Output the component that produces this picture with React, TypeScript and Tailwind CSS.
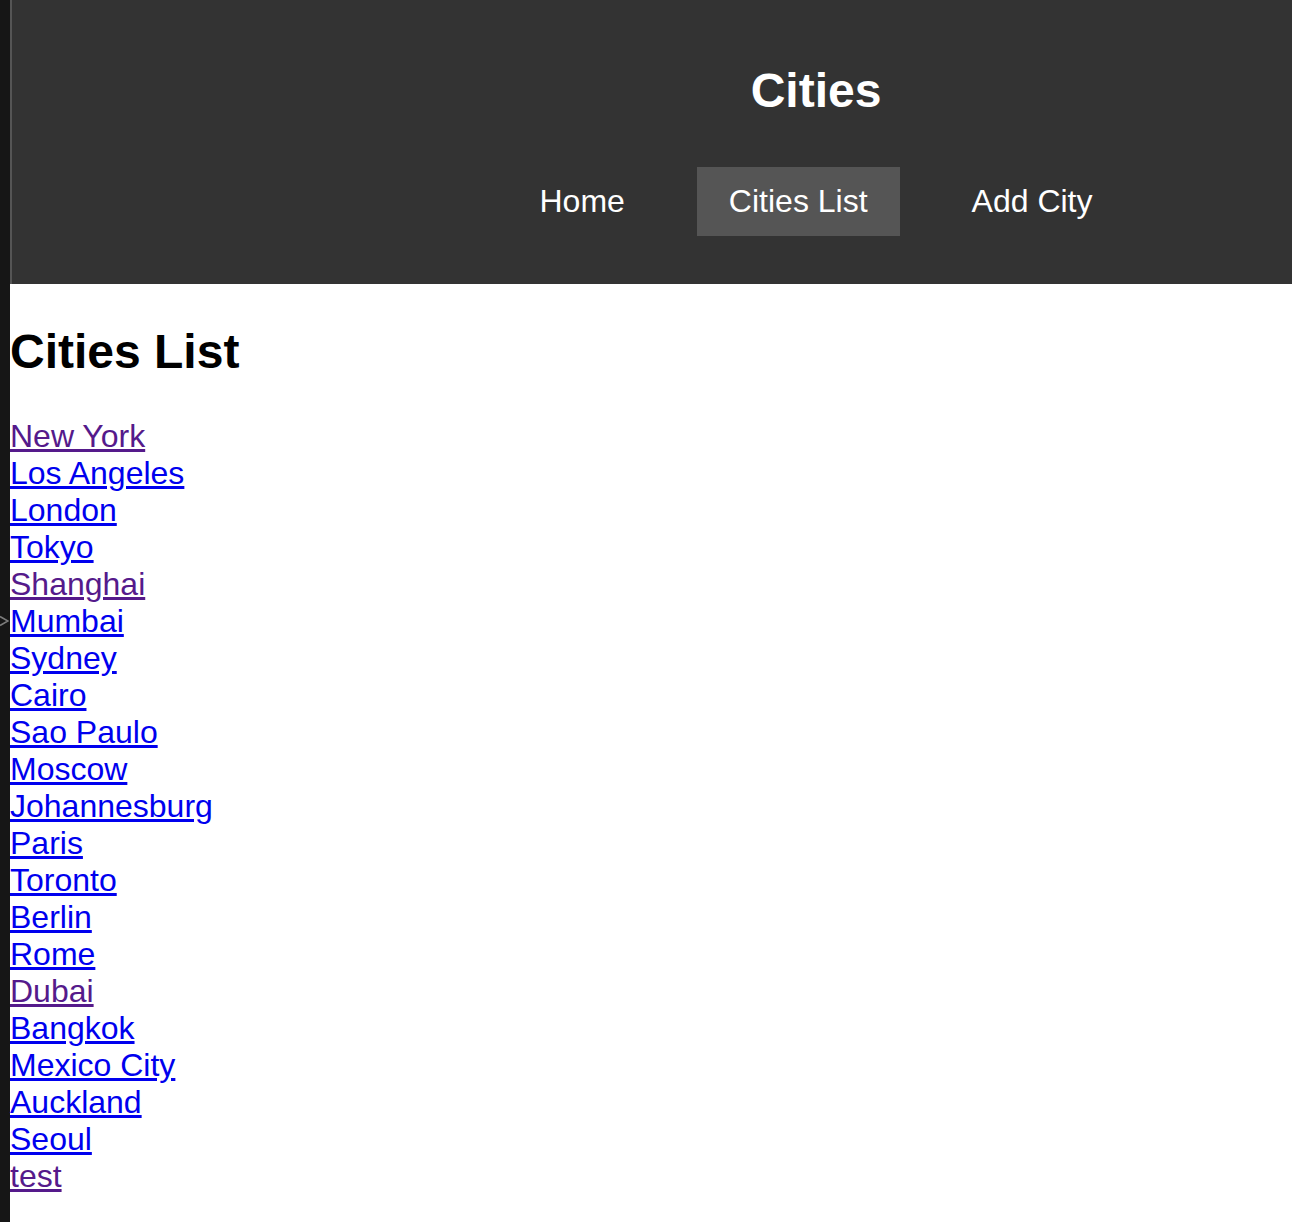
const cities = [
  { name: "New York", visited: true },
  { name: "Los Angeles" },
  { name: "London" },
  { name: "Tokyo" },
  { name: "Shanghai", visited: true },
  { name: "Mumbai" },
  { name: "Sydney" },
  { name: "Cairo" },
  { name: "Sao Paulo" },
  { name: "Moscow" },
  { name: "Johannesburg" },
  { name: "Paris" },
  { name: "Toronto" },
  { name: "Berlin" },
  { name: "Rome" },
  { name: "Dubai", visited: true },
  { name: "Bangkok" },
  { name: "Mexico City" },
  { name: "Auckland" },
  { name: "Seoul" },
  { name: "test", visited: true },
];

export default function App() {
  return (
    <div className="flex min-h-screen bg-white font-['Liberation_Sans',Arial,sans-serif]">
      {/* dark side strip with the little collapse chevron */}
      <div className="w-[10px] shrink-0 bg-[#161616] pt-[615px]">
        <svg width="9" height="12" viewBox="0 0 9 12" className="block">
          <polyline points="0,1.5 8,6 0,10.5" fill="none" stroke="#7c7c7c" strokeWidth="1.6" />
        </svg>
      </div>

      <div className="flex-1 min-w-0">
        <header className="bg-[#333333] border-l-2 border-[#555555] pl-[328px] pt-[63px] pb-[48px] text-white">
          <h1 className="text-center text-[48px] leading-[55px] font-bold">Cities</h1>
          <nav className="mt-[49px] flex justify-center gap-[40px]">
            <a href="#" className="px-[32px] py-[16px] text-[32px] leading-[37px] text-white">Home</a>
            <a href="#" className="px-[32px] py-[16px] text-[32px] leading-[37px] text-white bg-[#555555]">Cities List</a>
            <a href="#" className="px-[32px] py-[16px] text-[32px] leading-[37px] text-white">Add City</a>
          </nav>
        </header>

        <main className="pt-[40px]">
          <h2 className="text-[48px] leading-[55px] font-bold text-black">Cities List</h2>
          <ul className="mt-[39px]">
            {cities.map((c) => (
              <li key={c.name} className="text-[32px] leading-[37px]">
                <a href="#" className={c.visited ? "underline text-[#551a8b]" : "underline text-[#0000ee]"}>
                  {c.name}
                </a>
              </li>
            ))}
          </ul>
        </main>
      </div>
    </div>
  );
}
